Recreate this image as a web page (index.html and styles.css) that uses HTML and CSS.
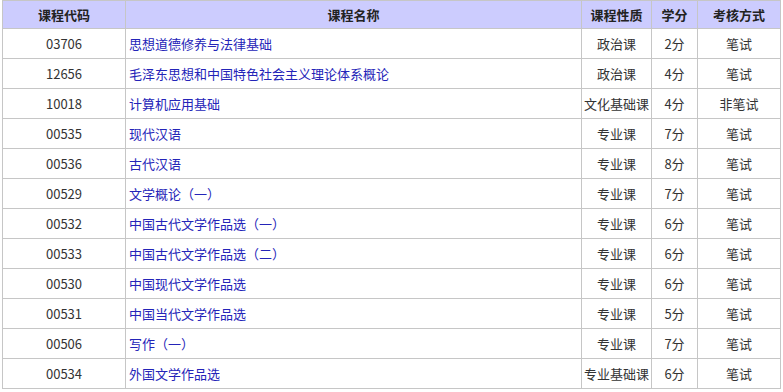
FILE: index.html
```html
<!DOCTYPE html>
<html lang="zh">
<head>
<meta charset="utf-8">
<link rel="stylesheet" href="styles.css">
</head>
<body>
<table class="courses">
<colgroup>
<col class="c-code"><col class="c-name"><col class="c-type"><col class="c-credit"><col class="c-exam">
</colgroup>
<thead>
<tr><th>课程代码</th><th>课程名称</th><th>课程性质</th><th>学分</th><th>考核方式</th></tr>
</thead>
<tbody>
<tr><td>03706</td><td class="name"><a href="#">思想道德修养与法律基础</a></td><td>政治课</td><td>2分</td><td>笔试</td></tr>
<tr><td>12656</td><td class="name"><a href="#">毛泽东思想和中国特色社会主义理论体系概论</a></td><td>政治课</td><td>4分</td><td>笔试</td></tr>
<tr><td>10018</td><td class="name"><a href="#">计算机应用基础</a></td><td>文化基础课</td><td>4分</td><td>非笔试</td></tr>
<tr><td>00535</td><td class="name"><a href="#">现代汉语</a></td><td>专业课</td><td>7分</td><td>笔试</td></tr>
<tr><td>00536</td><td class="name"><a href="#">古代汉语</a></td><td>专业课</td><td>8分</td><td>笔试</td></tr>
<tr><td>00529</td><td class="name"><a href="#">文学概论（一）</a></td><td>专业课</td><td>7分</td><td>笔试</td></tr>
<tr><td>00532</td><td class="name"><a href="#">中国古代文学作品选（一）</a></td><td>专业课</td><td>6分</td><td>笔试</td></tr>
<tr><td>00533</td><td class="name"><a href="#">中国古代文学作品选（二）</a></td><td>专业课</td><td>6分</td><td>笔试</td></tr>
<tr><td>00530</td><td class="name"><a href="#">中国现代文学作品选</a></td><td>专业课</td><td>6分</td><td>笔试</td></tr>
<tr><td>00531</td><td class="name"><a href="#">中国当代文学作品选</a></td><td>专业课</td><td>5分</td><td>笔试</td></tr>
<tr><td>00506</td><td class="name"><a href="#">写作（一）</a></td><td>专业课</td><td>7分</td><td>笔试</td></tr>
<tr><td>00534</td><td class="name"><a href="#">外国文学作品选</a></td><td>专业基础课</td><td>6分</td><td>笔试</td></tr>
</tbody>
</table>
</body>
</html>
```

FILE: styles.css
```css
html, body {
  margin: 0;
  padding: 0;
  background: #ffffff;
}
body {
  font-family: "Noto Sans CJK SC", "Microsoft YaHei", sans-serif;
  font-size: 13px;
  color: #333333;
}
.courses {
  border-collapse: collapse;
  margin-left: 2px;
  width: 778px;
  table-layout: fixed;
}
.c-code { width: 123px; }
.c-name { width: 456px; }
.c-type { width: 70px; }
.c-credit { width: 46px; }
.c-exam { width: 83px; }
.courses th,
.courses td {
  border: 1px solid #c6c6c6;
  text-align: center;
  padding: 0;
  line-height: 16px;
  white-space: nowrap;
}
.courses th {
  background: #ccccfe;
  font-weight: bold;
  color: #222222;
  height: 27px;
}
.courses td {
  height: 29px;
}
.courses td.name {
  text-align: left;
  padding-left: 3px;
}
.courses a {
  color: #2424b8;
  text-decoration: none;
}
```
